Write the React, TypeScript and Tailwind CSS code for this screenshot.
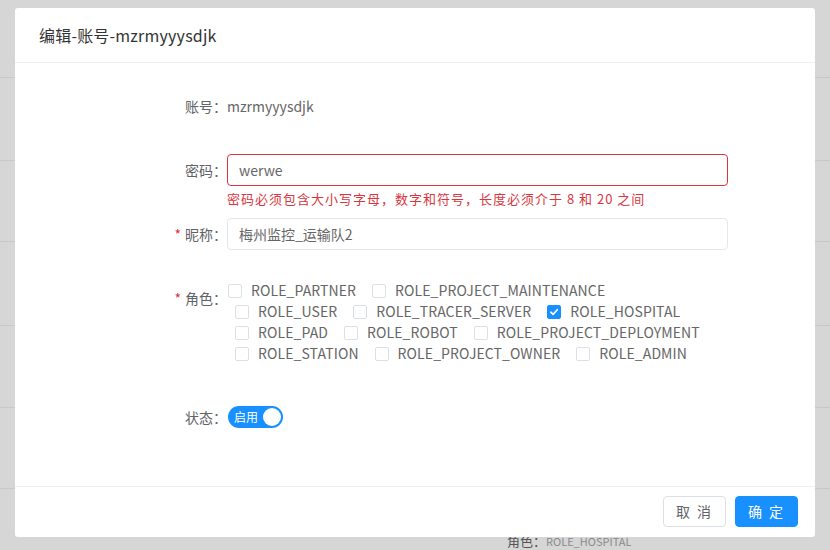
import React from "react";

const font = { fontFamily: '"Noto Sans CJK SC", "Noto Sans", sans-serif' };

function Checkbox({ label, checked }: { label: string; checked?: boolean }) {
  return (
    <div className="flex items-center">
      <span
        className={
          checked
            ? "flex h-[14px] w-[14px] items-center justify-center rounded-[2px] border border-[#1890ff] bg-[#1890ff]"
            : "h-[14px] w-[14px] rounded-[2px] border border-[#dcdfe6] bg-white"
        }
      >
        {checked && (
          <svg width="10" height="10" viewBox="0 0 10 10" fill="none">
            <path d="M1.8 5.2 L4.1 7.4 L8.3 2.7" stroke="white" strokeWidth="1.6" strokeLinecap="round" strokeLinejoin="round" />
          </svg>
        )}
      </span>
      <span className="ml-[9px] text-[14px] leading-[21px] tracking-[0.1px] text-[#666]">{label}</span>
    </div>
  );
}

export default function App() {
  const rows = [83, 81, 84, 82, 81];
  return (
    <div className="relative h-[550px] w-[830px] overflow-hidden bg-[#d6d6d6]" style={font}>
      {/* background page */}
      <div className="flex flex-col">
        <div className="h-[77px]" />
        {rows.map((h, i) => (
          <div key={i} className="border-t border-[#c8c8c8]" style={{ height: h }} />
        ))}
        <div className="flex h-[62px] items-baseline border-t border-[#c8c8c8] pl-[507px] pt-[44px] leading-[16px] text-[#8a8a8a]">
          <span className="text-[13px] text-[#555]">角色：</span>
          <span className="text-[11px]">ROLE_HOSPITAL</span>
        </div>
      </div>

      {/* modal */}
      <div className="absolute left-[15px] top-[8px] flex h-[529px] w-[800px] flex-col rounded-[3px] bg-white">
        <div className="flex h-[55px] items-center border-b border-[#ebeef5] pl-[24px] text-[16px] tracking-[0.2px] text-[#333]">
          编辑-账号-mzrmyyysdjk
        </div>
        <div className="flex flex-1 flex-col text-[14px]">
          <div className="mt-[33px] flex h-[20px] items-center">
            <div className="w-[212px] text-right text-[#606266]">账号：</div>
            <div className="text-[#666]">mzrmyyysdjk</div>
          </div>

          <div className="mt-[38px] flex items-center">
            <div className="w-[212px] text-right text-[#606266]">密码：</div>
            <div className="flex h-[32px] w-[501px] items-center rounded-[4px] border border-[#d9363e] px-[11px] text-[#666]">
              werwe
            </div>
          </div>
          <div className="mt-[5px] pl-[212px] text-[13px] leading-[16px] tracking-[1px] text-[#d9363e]">
            密码必须包含大小写字母，数字和符号，长度必须介于 8 和 20 之间
          </div>

          <div className="mt-[11px] flex items-center">
            <div className="w-[212px] text-right text-[#606266]">
              <span className="mr-[4px] text-[#d9363e]">*</span>昵称：
            </div>
            <div className="flex h-[32px] w-[501px] items-center rounded-[4px] border border-[#e4e7ed] px-[11px] text-[#666]">
              梅州监控_运输队2
            </div>
          </div>

          <div className="mt-[30px] flex">
            <div className="w-[212px] pt-[8px] text-right leading-[20px] text-[#606266]">
              <span className="mr-[4px] text-[#d9363e]">*</span>角色：
            </div>
            <div className="flex flex-col pl-px">
              <div className="flex gap-x-[16px]">
                <Checkbox label="ROLE_PARTNER" />
                <Checkbox label="ROLE_PROJECT_MAINTENANCE" />
              </div>
              <div className="flex gap-x-[16px] pl-[7px]">
                <Checkbox label="ROLE_USER" />
                <Checkbox label="ROLE_TRACER_SERVER" />
                <Checkbox label="ROLE_HOSPITAL" checked />
              </div>
              <div className="flex gap-x-[16px] pl-[7px]">
                <Checkbox label="ROLE_PAD" />
                <Checkbox label="ROLE_ROBOT" />
                <Checkbox label="ROLE_PROJECT_DEPLOYMENT" />
              </div>
              <div className="flex gap-x-[16px] pl-[7px]">
                <Checkbox label="ROLE_STATION" />
                <Checkbox label="ROLE_PROJECT_OWNER" />
                <Checkbox label="ROLE_ADMIN" />
              </div>
            </div>
          </div>

          <div className="mt-[42px] flex items-center">
            <div className="w-[212px] text-right text-[#606266]">状态：</div>
            <div className="ml-px flex h-[22px] w-[55px] items-center justify-between rounded-full bg-[#1890ff] pl-[6px] pr-[2px]">
              <span className="text-[12px] leading-[22px] text-white">启用</span>
              <span className="h-[18px] w-[18px] rounded-full bg-white" />
            </div>
          </div>
        </div>
        <div className="flex justify-end gap-[9px] border-t border-[#ebeef5] pb-[10px] pr-[17px] pt-[9px]">
          <button className="h-[31px] w-[63px] rounded-[4px] border border-[#dcdfe6] bg-white text-[14px] tracking-[2px] text-[#606266]">
            取 消
          </button>
          <button className="h-[31px] w-[63px] rounded-[4px] border border-[#1890ff] bg-[#1890ff] text-[14px] tracking-[2px] text-white">
            确 定
          </button>
        </div>
      </div>
    </div>
  );
}
